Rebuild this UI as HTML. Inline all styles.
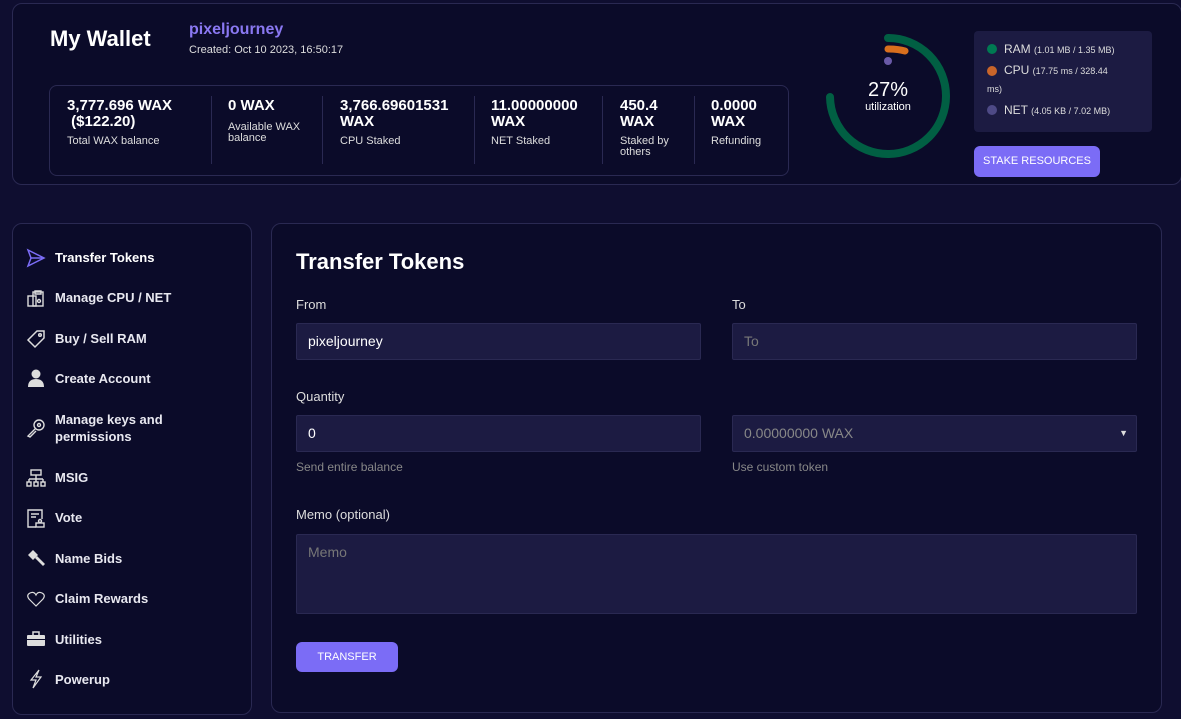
<!DOCTYPE html>
<html><head><style>
*{box-sizing:border-box;margin:0;padding:0}
body{width:1181px;height:719px;background:#0f0e30;font-family:"Liberation Sans",sans-serif;color:#fff;position:relative;overflow:hidden}
.card{position:absolute;background:#0b0b29;border:1px solid #2a2952;border-radius:10px}
.abs{position:absolute}
.stat{position:absolute;top:12px;font-size:15px;font-weight:bold;line-height:16px}
.stat small{display:block;font-size:11px;font-weight:normal;color:#ddd;margin-top:6px;line-height:11px}
.sep{position:absolute;top:10px;width:1px;height:68px;background:#2a2952}
.nav{position:absolute;left:55px;font-size:13px;font-weight:bold;color:#e8e8f0;line-height:17px}
.ic{position:absolute;left:26px;width:20px;height:20px}
.lbl{position:absolute;font-size:13px;color:#ddd}
.inp{position:absolute;background:#1c1b42;border:1px solid #2a2952;border-radius:2px;font-size:14px;padding-left:11px;line-height:35px}
.hint{position:absolute;font-size:12px;color:#888}
.btn{position:absolute;background:#7b6cf6;border-radius:6px;font-size:11px;text-align:center;color:#fff}
</style></head><body>
<div class="card" style="left:12px;top:3px;width:1170px;height:182px"></div>
<div class="abs" style="left:50px;top:26px;font-size:22px;font-weight:bold">My Wallet</div>
<div class="abs" style="left:189px;top:21px;font-size:16px;font-weight:bold;color:#8a78f2">pixeljourney</div>
<div class="abs" style="left:189px;top:44px;font-size:11px;color:#ddd">Created: Oct 10 2023, 16:50:17</div>
<div class="abs" style="left:49px;top:85px;width:740px;height:91px;border:1px solid #2a2952;border-radius:8px;background:#0b0b29">
 <div class="stat" style="left:17px">3,777.696 WAX<br>&nbsp;($122.20)<small>Total WAX balance</small></div>
 <div class="sep" style="left:161px"></div>
 <div class="stat" style="left:178px">0 WAX<small style="margin-top:8px">Available WAX<br>balance</small></div>
 <div class="sep" style="left:272px"></div>
 <div class="stat" style="left:290px">3,766.69601531<br>WAX<small>CPU Staked</small></div>
 <div class="sep" style="left:424px"></div>
 <div class="stat" style="left:441px">11.00000000<br>WAX<small>NET Staked</small></div>
 <div class="sep" style="left:552px"></div>
 <div class="stat" style="left:570px">450.4<br>WAX<small>Staked by<br>others</small></div>
 <div class="sep" style="left:644px"></div>
 <div class="stat" style="left:661px">0.0000<br>WAX<small>Refunding</small></div>
</div>
<svg class="abs" style="left:820px;top:30px" width="140" height="135" viewBox="0 0 140 135">
 <circle cx="68" cy="66" r="58" fill="none" stroke="#015f43" stroke-width="8" stroke-dasharray="272 400" stroke-linecap="round" transform="rotate(-90 68 66)" />
 <path d="M68 19 Q78 19 85 21" fill="none" stroke="#d96f1d" stroke-width="7" stroke-linecap="round"/>
 <circle cx="68" cy="31" r="4" fill="#6a5aa8"/>
 <text x="68" y="66" text-anchor="middle" font-size="20" fill="#fff" font-family="Liberation Sans">27%</text>
 <text x="68" y="80" text-anchor="middle" font-size="11" fill="#fff" font-family="Liberation Sans">utilization</text>
</svg>
<div class="abs" style="left:974px;top:31px;width:178px;height:101px;background:#1c1b42;border-radius:4px;font-size:12px;color:#ddd">
 <div class="abs" style="left:13px;top:13px;width:10px;height:10px;border-radius:5px;background:#007a52"></div>
 <div class="abs" style="left:30px;top:11px">RAM <span style="font-size:9px">(1.01 MB / 1.35 MB)</span></div>
 <div class="abs" style="left:13px;top:35px;width:10px;height:10px;border-radius:5px;background:#c9652a"></div>
 <div class="abs" style="left:30px;top:32px">CPU <span style="font-size:9px">(17.75 ms / 328.44</span></div>
 <div class="abs" style="left:13px;top:53px;font-size:9px">ms)</div>
 <div class="abs" style="left:13px;top:74px;width:10px;height:10px;border-radius:5px;background:#4e4a86"></div>
 <div class="abs" style="left:30px;top:72px">NET <span style="font-size:9px">(4.05 KB / 7.02 MB)</span></div>
</div>
<div class="btn" style="left:974px;top:146px;width:126px;height:31px;line-height:31px">STAKE RESOURCES</div>

<div class="card" style="left:12px;top:223px;width:240px;height:492px"></div>
<svg class="ic" style="top:248px" viewBox="0 0 20 20"><path d="M2 2 L18 10 L2 18 L5 10 Z M5 10 H18" fill="none" stroke="#7b6cf6" stroke-width="1.5"/></svg>
<div class="nav" style="top:249px;color:#fff">Transfer Tokens</div>
<svg class="ic" style="top:288px" viewBox="0 0 20 20" fill="none" stroke="#ddd" stroke-width="1.4"><rect x="2" y="8" width="8" height="10"/><rect x="7" y="4" width="10" height="14"/><path d="M9 3h6v3h-6z"/><circle cx="13" cy="13" r="1.5"/></svg>
<div class="nav" style="top:289px">Manage CPU / NET</div>
<svg class="ic" style="top:329px" viewBox="0 0 20 20" fill="none" stroke="#ddd" stroke-width="1.5"><path d="M2 11 L11 2 H18 V9 L9 18 Z"/><circle cx="14" cy="6" r="1.3"/></svg>
<div class="nav" style="top:330px">Buy / Sell RAM</div>
<svg class="ic" style="top:368px" viewBox="0 0 20 20" fill="#ddd"><circle cx="10" cy="6" r="4.5"/><path d="M2 19 Q2 11 10 11 Q18 11 18 19Z"/></svg>
<div class="nav" style="top:370px">Create Account</div>
<svg class="ic" style="top:418px" viewBox="0 0 20 20" fill="none" stroke="#ddd" stroke-width="1.4"><circle cx="13" cy="7" r="5"/><circle cx="13" cy="7" r="1.5"/><path d="M9 11 L2 18 L4 19 L10 13"/></svg>
<div class="nav" style="top:411px">Manage keys and<br>permissions</div>
<svg class="ic" style="top:468px" viewBox="0 0 20 20" fill="none" stroke="#ddd" stroke-width="1.4"><rect x="5" y="2" width="10" height="5"/><path d="M10 7v4M3 11h14M3 11v3M10 11v3M17 11v3"/><rect x="1" y="14" width="4" height="4"/><rect x="8" y="14" width="4" height="4"/><rect x="15" y="14" width="4" height="4"/></svg>
<div class="nav" style="top:469px">MSIG</div>
<svg class="ic" style="top:508px" viewBox="0 0 20 20" fill="none" stroke="#ddd" stroke-width="1.4"><path d="M10 19 H2 V2 H16 V11"/><path d="M5 6h8M5 9h5"/><rect x="10" y="15" width="8" height="4"/><circle cx="14" cy="13" r="1.5"/></svg>
<div class="nav" style="top:509px">Vote</div>
<svg class="ic" style="top:548px" viewBox="0 0 20 20" fill="#ddd"><path d="M2 7 L7 2 L12 7 L7 12Z"/><path d="M9 10 L17 18 L19 16 L11 8Z"/></svg>
<div class="nav" style="top:550px">Name Bids</div>
<svg class="ic" style="top:589px" viewBox="0 0 20 20" fill="none" stroke="#ddd" stroke-width="1.2"><path d="M10 17 L3 10 Q0 6 4 4 Q8 2 10 6 Q12 2 16 4 Q20 6 17 10Z"/></svg>
<div class="nav" style="top:590px">Claim Rewards</div>
<svg class="ic" style="top:629px" viewBox="0 0 20 20" fill="#ddd"><rect x="1" y="6" width="18" height="11" rx="1"/><path d="M7 6V3h6v3" fill="none" stroke="#ddd" stroke-width="1.5"/><rect x="1" y="10" width="18" height="1" fill="#0b0b29"/></svg>
<div class="nav" style="top:631px">Utilities</div>
<svg class="ic" style="top:669px" viewBox="0 0 20 20" fill="none" stroke="#ddd" stroke-width="1.2"><path d="M13 1 L5 11 H10 L7 19 L15 8 H10 Z"/></svg>
<div class="nav" style="top:671px">Powerup</div>

<div class="card" style="left:271px;top:223px;width:891px;height:490px"></div>
<div class="abs" style="left:296px;top:249px;font-size:22px;font-weight:bold">Transfer Tokens</div>
<div class="lbl" style="left:296px;top:297px">From</div>
<div class="lbl" style="left:732px;top:297px">To</div>
<div class="inp" style="left:296px;top:323px;width:405px;height:37px">pixeljourney</div>
<div class="inp" style="left:732px;top:323px;width:405px;height:37px;color:#777">To</div>
<div class="lbl" style="left:296px;top:389px">Quantity</div>
<div class="inp" style="left:296px;top:415px;width:405px;height:37px">0</div>
<div class="inp" style="left:732px;top:415px;width:405px;height:37px;color:#888">0.00000000 WAX<span style="position:absolute;right:8px;top:0;font-size:9px;color:#ddd">▼</span></div>
<div class="hint" style="left:296px;top:460px">Send entire balance</div>
<div class="hint" style="left:732px;top:460px">Use custom token</div>
<div class="lbl" style="left:296px;top:507px">Memo (optional)</div>
<div class="inp" style="left:296px;top:534px;width:841px;height:80px;color:#777">Memo</div>
<div class="btn" style="left:296px;top:642px;width:102px;height:30px;line-height:30px">TRANSFER</div>
</body></html>
